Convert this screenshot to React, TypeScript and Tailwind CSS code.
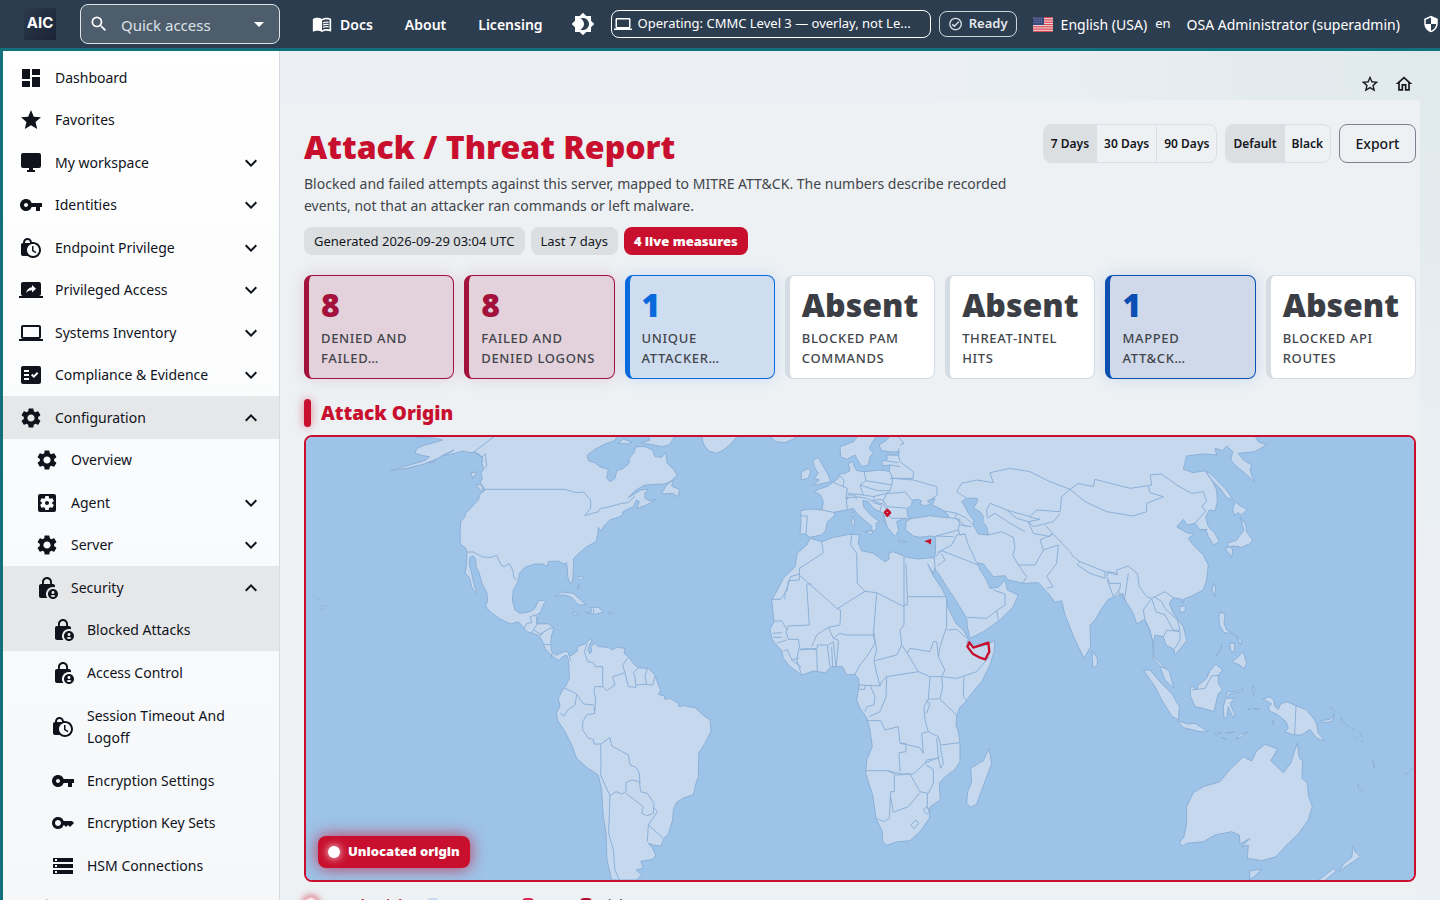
import React from "react";
import clsx from "clsx";
import type { IconType } from "react-icons";
import {
  MdArrowDropDown,
  MdBrightness4,
  MdComputer,
  MdDashboard,
  MdExpandLess,
  MdExpandMore,
  MdFactCheck,
  MdKey,
  MdLockClock,
  MdLockPerson,
  MdMenuBook,
  MdOutlineCheckCircle,
  MdOutlineHome,
  MdScreenShare,
  MdSearch,
  MdSecurity,
  MdSettings,
  MdSettingsApplications,
  MdStar,
  MdStarOutline,
  MdStorage,
  MdVpnKey,
} from "react-icons/md";

function DesktopIcon({ className }: { className?: string }) {
  return (
    <svg viewBox="0 0 24 24" fill="currentColor" className={className}>
      <path d="M4 2h16a2 2 0 0 1 2 2v11a2 2 0 0 1-2 2h-6v2h2v2H8v-2h2v-2H4a2 2 0 0 1-2-2V4a2 2 0 0 1 2-2z" />
    </svg>
  );
}

type NavItem = {
  label: string;
  icon: IconType | typeof DesktopIcon;
  level: 0 | 1 | 2;
  arrow?: "down" | "up";
  active?: boolean;
  tall?: boolean;
};

const navItems: NavItem[] = [
  { label: "Dashboard", icon: MdDashboard, level: 0 },
  { label: "Favorites", icon: MdStar, level: 0 },
  { label: "My workspace", icon: DesktopIcon, level: 0, arrow: "down" },
  { label: "Identities", icon: MdVpnKey, level: 0, arrow: "down" },
  { label: "Endpoint Privilege", icon: MdLockClock, level: 0, arrow: "down" },
  { label: "Privileged Access", icon: MdScreenShare, level: 0, arrow: "down" },
  { label: "Systems Inventory", icon: MdComputer, level: 0, arrow: "down" },
  { label: "Compliance & Evidence", icon: MdFactCheck, level: 0, arrow: "down" },
  { label: "Configuration", icon: MdSettings, level: 0, arrow: "up", active: true },
  { label: "Overview", icon: MdSettings, level: 1 },
  { label: "Agent", icon: MdSettingsApplications, level: 1, arrow: "down" },
  { label: "Server", icon: MdSettings, level: 1, arrow: "down" },
  { label: "Security", icon: MdLockPerson, level: 1, arrow: "up", active: true },
  { label: "Blocked Attacks", icon: MdLockPerson, level: 2, active: true },
  { label: "Access Control", icon: MdLockPerson, level: 2 },
  { label: "Session Timeout And Logoff", icon: MdLockClock, level: 2, tall: true },
  { label: "Encryption Settings", icon: MdVpnKey, level: 2 },
  { label: "Encryption Key Sets", icon: MdKey, level: 2 },
  { label: "HSM Connections", icon: MdStorage, level: 2 },
];

const cards = [
  { value: "8", label: "Denied and failed…", tone: "red" },
  { value: "8", label: "Failed and denied logons", tone: "red" },
  { value: "1", label: "Unique attacker…", tone: "blue" },
  { value: "Absent", label: "Blocked PAM commands", tone: "none" },
  { value: "Absent", label: "Threat-intel hits", tone: "none" },
  { value: "1", label: "Mapped ATT&CK…", tone: "navy" },
  { value: "Absent", label: "Blocked API routes", tone: "none" },
];

function Flag() {
  return (
    <svg viewBox="0 0 20 15" className="h-[15px] w-5 shrink-0">
      <clipPath id="flag">
        <rect width="20" height="15" rx="2" />
      </clipPath>
      <g clipPath="url(#flag)">
        <rect width="20" height="15" fill="#f3dfe2" />
        {[0, 1, 2, 3, 4, 5, 6].map((i) => (
          <rect key={i} y={i * 2.3} width="20" height="1.2" fill="#d9444f" />
        ))}
        <rect width="11" height="8" fill="#3b4a7c" />
        <path
          d="M1 1.5h9M1 3.5h9M1 5.5h9"
          stroke="#a7b1cf"
          strokeWidth=".6"
          strokeDasharray=".8 1"
        />
      </g>
    </svg>
  );
}

function Header() {
  return (
    <header className="flex h-[51px] shrink-0 items-center overflow-hidden border-b-[3px] border-[#11707c] bg-[#2d3d50] pl-6 whitespace-nowrap text-white">
      <div className="flex size-8 shrink-0 justify-center bg-linear-to-br from-[#2a3a4c] to-[#1b2436] pt-[6px] font-[Inter] text-[15px] leading-[18px] font-bold">
        AIC
      </div>
      <button className="ml-6 flex h-10 w-50 shrink-0 items-center rounded-lg border border-[#dfe4ea] bg-[#4e5d6c] px-2 text-[15px] text-[#dde2e7]">
        <MdSearch className="size-5 text-white" />
        <span className="ml-3 pt-[2px]">Quick access</span>
        <MdArrowDropDown className="ml-auto size-6 text-white" />
      </button>
      <nav className="ml-8 flex shrink-0 items-center gap-8 text-[14px] font-semibold">
        <a href="#docs" className="flex items-center gap-2">
          <MdMenuBook className="size-5" />
          Docs
        </a>
        <a href="#about">About</a>
        <a href="#licensing">Licensing</a>
      </nav>
      <button aria-label="Theme" className="ml-7 shrink-0">
        <MdBrightness4 className="size-6" />
      </button>
      <button className="ml-4 flex h-7 w-80 shrink-0 items-center gap-[6px] rounded-lg border border-white px-[2px] text-[13px]">
        <MdComputer className="size-[18px] shrink-0" />
        <span className="truncate">Operating: CMMC Level 3 — overlay, not Le...</span>
      </button>
      <span className="ml-2 flex h-[26px] w-[78px] shrink-0 items-center gap-[6px] rounded-lg border border-[#cdd4db] px-2 text-[13px] font-semibold text-[#e3e7ea]">
        <MdOutlineCheckCircle className="size-4" />
        Ready
      </span>
      <div className="ml-4 flex shrink-0 items-center gap-2 text-[14px]">
        <Flag />
        <span>English (USA)</span>
        <span className="text-[13px]">en</span>
      </div>
      <span className="ml-4 shrink-0 text-[14px]">OSA Administrator (superadmin)</span>
      <MdSecurity className="ml-[22px] size-[18px] shrink-0" />
    </header>
  );
}

function Sidebar() {
  return (
    <aside className="w-[280px] shrink-0 overflow-hidden border-r border-l-[3px] border-r-[#d5dbe2] border-l-[#11707c] bg-linear-to-b from-white to-[#f5f7f9] pt-[5px]">
      <ul className="text-[14px] leading-[22px] text-[#10131c]">
        {navItems.map((item) => (
          <li key={item.label}>
            <a
              href="#nav"
              className={clsx(
                "flex items-center pr-4",
                item.level === 0 && "pl-4",
                item.level === 1 && "pl-8",
                item.level === 2 && "pl-12",
                item.active && "bg-[#e6e7e9]",
                item.tall ? "h-[65px]" : "h-[42px] [li:nth-child(odd)>&]:h-[43px]"
              )}
            >
              <item.icon className="size-6 shrink-0" />
              <span className="ml-3 flex-1">{item.label}</span>
              {item.arrow === "down" && <MdExpandMore className="size-6" />}
              {item.arrow === "up" && <MdExpandLess className="size-6" />}
            </a>
          </li>
        ))}
        <li className="flex h-[43px] items-center pl-8">
          <MdStar className="size-6" />
        </li>
      </ul>
    </aside>
  );
}

// Land masses, west to east. Each region is traced in its own frame.
const americas = [
  "M325 10 350 22 400 24 428 30 395 40 370 46 350 56 345 70 365 76 388 80 378 90 350 99 310 110 272 122 320 115 372 102 408 88 430 75 462 60 430 77 465 70 490 63 510 68 524 66 540 74 548 84 546 100 550 118 543 128 547 145 541 158 556 180 540 192 535 210 518 228 497 250 494 262 482 275 480 310 481 342 498 355 501 370 499 408 495 430 508 442 515 470 526 490 528 482 520 455 514 425 508 405 510 382 520 378 527 388 528 410 538 430 545 458 560 488 563 512 557 528 570 545 600 567 633 582 655 575 668 590 680 605 700 610 718 618 730 640 735 655 750 672 765 684 778 692 785 682 800 675 806 692 808 745 795 772 785 785 775 805 780 828 770 848 772 870 795 905 815 945 830 985 860 1012 895 1035 905 1080 910 1160 918 1210 921 1290 935 1350 1010 1350 1025 1334 1008 1320 1030 1314 1022 1294 1060 1288 1067 1275 1058 1255 1045 1240 1060 1245 1083 1248 1092 1225 1105 1212 1118 1170 1120 1140 1130 1117 1150 1104 1180 1094 1188 1060 1195 1040 1196 970 1215 940 1233 905 1230 868 1215 860 1185 833 1150 827 1137 830 1135 820 1110 805 1095 808 1093 798 1075 793 1082 780 1075 765 1065 735 1045 715 1015 714 1000 700 985 680 972 670 975 655 950 652 935 660 925 652 895 650 885 640 872 650 876 662 870 672 864 660 870 640 877 632 870 628 855 642 835 648 830 665 812 678 800 663 785 668 768 676 755 665 752 640 755 615 762 595 745 581 710 582 714 560 722 545 730 525 740 510 715 512 705 535 690 545 660 550 645 540 637 510 640 480 655 452 658 430 675 412 705 402 728 402 742 409 745 395 775 393 790 402 800 398 802 420 803 440 810 460 818 453 820 420 821 385 840 367 860 350 888 335 894 310 895 292 903 304 914 285 930 270 965 258 970 244 1000 230 1010 210 1018 215 1010 235 1040 225 1068 208 1048 212 1035 205 1035 190 1045 178 1022 180 985 203 1005 182 1032 166 1060 163 1095 162 1115 152 1132 135 1120 118 1102 100 1097 68 1085 82 1065 80 1058 60 1035 50 1008 50 1000 70 988 85 987 100 970 115 950 122 945 145 930 155 920 143 925 118 900 110 885 98 865 92 862 75 885 58 915 42 945 32 955 10Z",
  "M1085 190 1100 165 1120 150 1115 168 1138 178 1135 200 1118 190 1090 192Z",
  "M1025 38 1050 30 1040 10 1130 10 1108 45 1085 50Z",
  "M955 40 970 27 995 36 985 42Z",
  "M1203 10 1210 42 1225 62 1250 70 1270 60 1290 45 1320 10Z",
  "M513 128 532 126 518 145Z",
  "M528 162 545 165 550 185 538 178Z",
  "M762 500 785 486 820 490 840 508 858 524 835 525 815 502 790 494Z",
  "M856 548 875 546 872 532 895 532 912 546 885 553Z",
  "M818 548 830 546 836 553 822 555Z",
  "M925 547 940 548 938 553 926 552Z",
  "M832 440 848 438 850 448M835 460 838 470 834 478Z",
  "M40 498 44 500M52 506 60 512M66 526 76 532 66 540Z",
  "M385 98 405 90 402 97Z",
];

const americasBorders = [
  "M522 66 582 20",
  "M522 66 545 82 556 72 560 108 550 118",
  "M556 178 792 178 830 188 850 186 872 210 872 235 854 257 895 245 900 236 930 230 965 220 985 218 1005 197",
  "M498 366 520 366 548 381 575 382 590 376 603 405 612 410 628 401 638 420 642 444 655 452",
  "M672 595 680 580 695 578 690 560 708 555 712 582M708 555 722 548M712 582 695 608M702 600 720 612 750 595 762 594M718 618 730 610M730 642 752 645M757 668 752 684M806 670 812 692",
  "M880 535 882 552",
  "M862 640 853 665 863 695 880 698 886 710 908 710 908 770 884 770 882 785 887 805 884 850 860 855 848 875 848 900 865 925 880 928 882 942 902 942 930 923 935 948 985 975 990 1005 1008 1012 1018 1030 1020 1060",
  "M882 825 850 822 830 792 795 775M830 795 825 825 803 840 792 858 780 850",
  "M882 830 884 850M908 770 920 782 945 765 938 740 975 728 968 705 985 682M975 728 985 770 1008 772 1005 740 1000 728 1015 714M1008 765 1040 763 1035 740 1042 715M1040 763 1058 766 1065 738",
  "M902 942 903 1000 902 1035 915 1065 930 1097 948 1085 965 1092 978 1085 978 1058 995 1050 1018 1055 1022 1085 1042 1090 1062 1120 1060 1150 1040 1157 1025 1150 1030 1130 978 1090",
  "M930 1097 928 1150 926 1210 940 1260 945 1320 958 1350",
  "M1062 1132 1072 1145 1045 1185 1090 1225M1045 1185 1042 1235",
];

const eurasia = [
  "M330 322 315 312 300 312 303 280 302 242 330 237 366 240 370 215 362 195 343 185 355 178 385 168 400 155 415 145 418 132 435 130 450 122 445 100 460 95 462 108 470 122 495 125 540 120 568 124 570 105 548 108 545 95 562 88 560 75 595 76 598 65 575 66 545 62 537 45 560 30 575 10 1660 10 1675 35 1700 45 1665 65 1615 70 1630 90 1655 105 1650 120 1663 155 1635 130 1610 110 1592 90 1598 65 1580 48 1568 62 1545 55 1550 75 1510 72 1460 78 1450 118 1480 128 1515 122 1535 150 1550 180 1552 215 1545 243 1528 240 1517 262 1525 290 1545 310 1558 335 1540 345 1525 320 1518 300 1500 300 1485 280 1462 285 1450 268 1430 290 1460 308 1483 312 1465 325 1480 345 1510 375 1525 405 1520 450 1510 480 1475 498 1450 508 1448 520 1445 508 1420 503 1408 520 1420 550 1450 590 1460 632 1425 675 1422 658 1398 645 1390 620 1365 615 1360 640 1362 680 1380 700 1408 725 1422 775 1395 750 1380 710 1360 685 1358 630 1338 575 1330 570 1310 582 1300 550 1278 515 1268 490 1245 500 1225 508 1205 535 1185 570 1170 585 1172 650 1152 685 1125 630 1095 555 1085 512 1065 517 1045 490 1015 458 970 460 925 450 915 437 880 440 860 415 850 402 832 398 840 420 860 450 870 475 895 472 915 450 922 480 955 495 940 530 900 570 850 605 810 625 802 590 800 565 770 515 740 470 712 425 708 424 700 400 706 370 707 320 690 318 660 322 640 318 617 300 618 275 635 265 612 265 590 275 596 302 585 320 565 295 553 275 550 250 520 235 505 215 488 212 492 232 515 258 540 275 528 280 530 298 516 305 515 288 490 268 470 250 460 235 440 240 405 246 403 258 382 275 378 300 365 315Z",
  "M480 10 460 35 420 50 422 80 440 88 465 75 470 85 485 110 505 105 510 80 520 70 508 55 515 40 535 10Z",
  "M338 92 355 82 365 100 385 135 392 155 360 162 338 165 358 150 342 145 355 130 345 115Z",
  "M305 125 325 115 332 125 325 145 303 150Z",
  "M205 10 225 35 255 38 285 25 290 10Z",
  "M494 305 518 302 515 315ZM455 266 465 268 462 288 455 284ZM458 245 464 250 460 262 455 255ZM595 330 620 335 600 337Z",
  "M1515 122 1530 130 1575 175 1600 210 1580 203 1560 175 1535 150Z",
  "M1605 215 1622 228 1642 238 1625 255 1612 248 1605 258 1598 240Z",
  "M1620 262 1638 285 1640 305 1658 330 1652 340 1625 352 1600 348 1585 350 1582 340 1610 330 1620 315 1632 300Z",
  "M1575 355 1590 350 1598 360 1595 383 1588 372ZM1598 352 1615 350 1605 360Z",
  "M1540 458 1547 475 1545 500 1536 482ZM1438 530 1457 527 1455 545 1442 548Z",
  "M1176 662 1192 685 1192 710 1178 710Z",
  "M1560 546 1575 552 1572 580 1580 600 1605 612 1612 622 1595 610 1572 608 1558 585 1557 560ZM1610 622 1625 632 1622 645ZM1588 640 1605 640 1602 668 1592 660ZM1546 680 1560 660 1567 642 1560 665ZM1595 695 1610 685 1630 665 1640 700 1632 717 1620 705Z",
];

const eurasiaBorders = [
  "M303 258 322 258 318 312M366 240 405 248M400 157 430 170 442 175 438 200 442 240M430 170 432 150 418 135M442 190 490 195 480 165 498 152 492 125M498 152 575 165 578 145 568 122M480 165 510 175 535 182 570 182 575 165M490 195 520 200 560 190 570 182M438 205 470 200 500 205 520 215M520 200 525 215 550 222 560 240M440 210 445 195 465 195 470 208",
  "M570 145 640 145 640 125 600 95 595 76M570 105 600 110M555 92 595 98M578 145 640 150 710 170 712 195 690 210M560 190 600 188 615 185 635 210M560 190 550 212 562 230 625 235M562 230 558 250 575 265 612 265M515 212 545 208 555 220M520 218 545 225 540 245M550 250 560 285",
  "M600 45 612 40 595 20M596 76 596 55",
  "M720 240 770 250 800 265 820 285M770 250 765 265 800 290M745 262 780 268 775 300 708 318M775 300 780 315 795 312 805 345 830 398M795 312 770 315 755 345 712 368M708 318 760 320M708 380 725 362 835 405M712 408 735 390 725 372M778 285 815 290",
  "M770 185 785 160 830 150 880 158 870 128 930 115 990 125 1050 155 1110 178 1135 160 1180 170 1185 148 1290 175 1340 168 1355 165 1350 135 1385 132 1430 165 1475 190 1510 185 1520 215 1505 228 1517 243",
  "M770 185 800 205M860 265 885 250 930 280 975 305M870 220 860 240 862 260M870 220 920 240 990 260 1010 240 1080 245 1085 200 1110 178M920 240 950 265 985 275 1000 310 1050 320 1055 310",
  "M865 315 905 305 940 322 945 355 938 375 955 405 1005 405 1030 360 1020 330 1060 312M955 405 980 440 968 460M1030 360 1075 345 1070 400 1040 440 1060 470 1040 475",
  "M990 262 1020 268 985 275 1000 290 1060 275 1080 250M1035 285 1060 312 1110 365 1120 380 1140 395 1215 425 1215 445 1170 430 1132 405 1140 395",
  "M1110 178 1155 215 1220 245 1300 258 1340 245 1340 220 1390 200 1350 188 1345 168",
  "M1215 425 1252 435 1250 420 1285 408 1312 430 1318 470 1340 500 1355 505 1395 485 1420 503M1220 440 1225 425 1252 430M1222 442 1228 460 1262 460 1258 482 1240 498M1252 480 1278 515M1285 430 1275 500M1222 450 1240 500",
  "M1355 505 1330 540 1335 570 1350 600 1358 640M1355 505 1368 545 1395 555 1420 600 1440 600 1432 570 1395 535 1385 515 1362 500M1390 620 1400 600 1440 605 1440 630 1425 655M1378 708 1395 715",
  "M802 562 860 565 890 542 915 525 915 492 880 480M890 542 895 570M1485 280 1500 262 1517 243M1498 300 1522 298",
];

const africa = [
  "M330 325 365 335 400 322 455 312 478 315 475 340 485 362 520 370 555 395 567 388 566 370 580 365 620 382 655 387 690 383 703 385 705 412 700 430 683 402 700 438 725 475 740 505 745 535 758 560 768 580 790 600 805 628 800 640 820 652 850 648 885 632 882 665 870 705 845 755 815 790 795 818 780 832 770 858 768 885 775 905 780 940 780 995 765 1018 730 1045 718 1060 721 1110 690 1130 688 1165 660 1205 630 1232 590 1236 560 1246 548 1235 547 1205 528 1165 518 1095 497 1030 500 990 517 950 510 900 500 862 480 835 470 810 478 765 475 745 465 733 440 735 428 710 395 710 375 728 340 723 305 735 270 710 250 685 245 662 225 640 215 625 210 598 222 575 215 510 235 475 250 445 285 410 292 370 320 345Z",
  "M867 955 875 1000 860 1040 830 1122 812 1132 800 1120 803 1085 815 1055 812 1015 850 992Z",
];

const africaBorders = [
  "M365 335 370 368 345 385 298 415 298 450 265 452 262 480 242 508 217 508M298 435 412 536 495 484 530 488 612 530 612 380M298 432 272 440 255 490 255 508M455 312 452 345 470 370 472 460 495 484M612 525 622 525 622 500 738 500M622 500 618 400",
  "M320 462 328 585 265 588 258 605 265 628 295 628 300 658 322 655M320 462 335 462M412 536 422 540 420 585 385 592 400 625 418 610 440 615 520 615 530 490M222 573 245 573 262 600M218 610 245 608M218 622 245 622M230 640 260 630M250 665 262 658 275 690 295 685M275 690 305 712M297 655 290 690 305 735M322 655 350 660 352 725M300 660 352 655 352 645 382 645 390 712M335 650 350 615 385 592M385 645 400 635 408 710M395 650 398 710M400 625 415 630 412 680 408 710",
  "M520 615 525 640 500 680 480 705 465 733M520 600 530 660 522 690 530 730 540 768 478 765M525 692 590 675 605 645 622 670 655 725 560 740 545 755 540 768M612 530 612 585 600 600 605 645M622 670 630 655 690 665 700 635 710 635 715 680 735 720 725 740M740 505 740 590 720 650 715 680M740 600 770 598 800 625",
  "M655 725 690 740 725 740 770 745 830 725 868 680M725 740 728 770 720 808 770 855M792 740 790 800 800 812M690 740 685 808 718 806M685 808 672 830 675 870 685 905M678 812 690 820 680 850M560 740 558 800 540 845 508 860M478 778 495 778 495 765M510 765 525 800 522 825 500 830 495 845M500 872 542 872 555 900 595 890 600 940 658 952 670 970 665 910 685 905 715 920 722 945 780 938M600 940 618 940 618 965 597 968 600 1025M497 1022 562 1022 605 1032 640 1032 675 1000 720 980M675 1000 680 990 715 985 710 925M715 985 722 1015 730 1000 720 945M562 1022 590 1035 630 1032 660 1085 685 1090 700 1060 700 1018 678 1005M583 1035 583 1085 572 1085 568 1165 550 1175 530 1165M572 1100 580 1147 625 1130 660 1088M682 1090 682 1130 690 1145M670 1140 680 1130 688 1145 680 1153ZM632 1185 648 1170 656 1180 642 1196Z",
];

const oceania = [
  "M417 1240 432 1220 440 1180 440 1130 460 1088 490 1070 540 1055 570 1018 610 980 635 993 650 962 675 943 713 957 692 992 730 1028 752 1000 772 938 778 985 788 992 786 1045 802 1060 805 1095 817 1130 805 1170 775 1212 745 1240 708 1280 665 1292 622 1285 625 1245 605 1250 630 1225 600 1242 598 1215 575 1205 525 1215 490 1235 440 1240 430 1248Z",
  "M630 1322 665 1318 640 1342 628 1348ZM830 1355 880 1316 890 1322 850 1355ZM896 1325 912 1300 935 1282 940 1245 945 1265 962 1280 940 1295Z",
  "M310 720 330 720 360 755 395 790 418 830 415 870 395 858 365 810 345 770Z",
  "M413 873 445 882 465 880 505 905 480 905 430 893Z",
  "M523 910 545 908 530 914ZM555 908 583 906 560 912ZM545 922 558 928ZM588 928 600 913 625 906 600 922Z",
  "M450 780 455 768 470 778 475 765 500 745 508 725 527 702 548 720 535 735 535 760 548 780 535 790 522 845 490 835 465 830 452 800Z",
  "M562 785 600 783 610 773 605 787 570 790 560 805 585 805 570 820 585 855 580 865 565 830 560 865 552 865 550 830 558 800Z",
  "M638 767 645 780 640 800ZM622 838 632 838ZM640 835 662 836 650 840ZM698 870 702 875 699 885Z",
  "M668 807 690 800 702 812 705 830 715 838 722 822 740 815 768 827 800 840 820 865 830 882 835 910 855 933 830 925 810 898 785 915 762 915 735 905 745 895 738 875 710 852 690 845 685 830 695 822Z",
  "M842 872 870 868 884 850 875 875 850 878ZM867 828 885 845M903 863 915 882 905 878ZM920 886 928 890M935 895 945 900M948 920 955 924M958 905 968 922M962 932 969 937M998 990 1004 1000 1002 1014ZM953 1063 970 1087 958 1080ZM1092 1032 1105 1028 1096 1037ZM1112 1018 1122 1012",
];

const oceaniaBorders = ["M768 827 764 915", "M455 780 495 775 515 738 535 736M500 738 508 725"];

function WorldMap() {
  return (
    <svg
      viewBox="0 0 1108 443"
      role="img"
      aria-label="Attack origin map"
      className="block w-full bg-[#9dc3e8]"
    >
      <g fill="#c6d8ee" stroke="#8cb0d7" strokeWidth="3" strokeLinejoin="round">
        <g transform="translate(-6 -7) scale(.33333)">
          <path d={americas.join("")} />
          <path d={americasBorders.join("")} fill="none" />
        </g>
        <g transform="translate(394 -7) scale(.33333)">
          <path d={eurasia.join("")} />
          <path d={eurasiaBorders.join("")} fill="none" />
          <path
            d="M622 258 622 237 635 225 637 210 655 208 665 213 660 222 675 228 692 222 682 212 705 205 697 225 725 238 745 255 745 264 690 257 640 265ZM785 215 800 205 832 205 833 215 825 225 820 235 840 245 850 260 848 275 860 290 865 315 835 312 820 285 822 272 805 250 795 230Z"
            fill="#9dc3e8"
          />
          <path d={africa.join("")} />
          <path d={africaBorders.join("")} fill="none" />
          <g stroke="#c8102e">
            <path
              d="M802 650 808 637 820 653 865 638 868 665 856 688 840 683 818 671Z"
              fill="none"
              strokeWidth="7"
            />
            <path d="M555 247 562 240 570 248 562 257Z" strokeWidth="8" />
            <path
              d="M677 334 692 329 690 341 686 336Z"
              fill="#c8102e"
              strokeWidth="4"
            />
          </g>
        </g>
        <g transform="translate(734 -7) scale(.33333)">
          <path d={oceania.join("")} />
          <path d={oceaniaBorders.join("")} fill="none" />
        </g>
      </g>
    </svg>
  );
}

function Segmented({ options }: { options: string[] }) {
  return (
    <div className="flex h-[39px] divide-x divide-[#d9dfe7] overflow-hidden rounded-lg border border-[#d9dfe7]">
      {options.map((option, i) => (
        <button
          key={option}
          className={clsx("px-[7px] text-[12px] font-semibold", i === 0 && "bg-[#dcdfe2]")}
        >
          {option}
        </button>
      ))}
    </div>
  );
}

function App() {
  return (
    <div className="flex h-screen flex-col overflow-hidden bg-[#ecf0f4] font-['Noto_Sans','Open_Sans',sans-serif] text-[#15171c]">
      <Header />
      <div className="flex min-h-0 flex-1">
        <Sidebar />
        <main className="min-w-0 flex-1 overflow-hidden bg-[radial-gradient(circle_at_top_right,#e0e9eb,#ecf0f4_520px)] pr-5">
          <div className="flex h-[49px] items-center justify-end gap-[14px] pt-4 pr-[6px]">
            <button aria-label="Add to favorites">
              <MdStarOutline className="size-5" />
            </button>
            <button aria-label="Home">
              <MdOutlineHome className="size-5" />
            </button>
          </div>
          <div className="bg-[#edf1f4] pt-6 pr-1 pl-6">
            <div className="flex items-start justify-between">
              <div className="max-w-[736px]">
                <h1 className="mb-[3px] text-[32px] leading-[46px] font-black text-[#c8102e]">
                  Attack / Threat Report
                </h1>
                <p className="text-[14px] leading-[22px] text-[#42454b]">
                  Blocked and failed attempts against this server, mapped to MITRE ATT&CK. The
                  numbers describe recorded events, not that an attacker ran commands or left
                  malware.
                </p>
              </div>
              <div className="flex gap-2">
                <Segmented options={["7 Days", "30 Days", "90 Days"]} />
                <Segmented options={["Default", "Black"]} />
                <button className="h-[39px] w-[77px] rounded-lg border border-[#7c828e] text-[14px] font-medium">
                  Export
                </button>
              </div>
            </div>

            <div className="mt-[10px] flex gap-[6px] text-[13px] leading-7">
              <span className="rounded-lg bg-[#dbdfe2] px-[10px]">
                Generated 2026-09-29 03:04 UTC
              </span>
              <span className="rounded-lg bg-[#dbdfe2] px-[10px]">Last 7 days</span>
              <span className="rounded-lg bg-[#c8102e] px-[10px] font-black text-white">
                4 live measures
              </span>
            </div>

            <div className="mt-5 grid grid-cols-7 gap-[10px]">
              {cards.map((card, i) => (
                <div
                  key={i}
                  className={clsx(
                    "h-[104px] rounded-lg border border-l-[5px] pt-[9px] pr-3 pl-3",
                    card.tone === "red" &&
                      "border-[#a3123a] bg-[#e3d1db] shadow-[0_0_16px_#a3123a26]",
                    card.tone === "blue" &&
                      "border-[#0a69dc] bg-[#cfddf0] shadow-[0_0_16px_#0a69dc26]",
                    card.tone === "navy" &&
                      "border-[#0b4fb3] bg-[#cfd9ea] shadow-[0_0_16px_#0b4fb326]",
                    card.tone === "none" && "border-[#d6dce4] bg-white"
                  )}
                >
                  <div
                    className={clsx(
                      "text-[32px] leading-[40px] font-black",
                      card.tone === "red" && "text-[#a3123a]",
                      card.tone === "blue" && "text-[#0a69dc]",
                      card.tone === "navy" && "text-[#0b4fb3]",
                      card.tone === "none" && "text-[#3b3e45]"
                    )}
                  >
                    {card.value}
                  </div>
                  <div className="mt-[3px] text-[13px] leading-5 font-medium tracking-wider text-[#42454b] uppercase">
                    {card.label}
                  </div>
                </div>
              ))}
            </div>

            <h2 className="mt-5 flex items-center gap-[10px] text-[19px] leading-7 font-black text-[#c8102e]">
              <span className="h-7 w-[7px] rounded-full bg-[#c8102e] shadow-[0_0_10px_#c8102e80]" />
              Attack Origin
            </h2>

            <div className="relative mt-2 overflow-hidden rounded-lg border-2 border-[#c8102e]">
              <WorldMap />
              <div className="absolute bottom-3 left-3 flex h-8 items-center gap-2 rounded-lg bg-[#c8102e] px-[10px] text-[13px] font-black text-white shadow-[0_0_16px_#c8102ecc]">
                <span className="size-3 rounded-full bg-white shadow-[0_0_8px_white]" />
                Unlocated origin
              </div>
            </div>

            <div className="mt-3 flex items-center gap-4 text-[13px] leading-5">
              <span className="flex items-center gap-2 font-bold text-[#c8102e]">
                <span className="size-[14px] rounded-full border-2 border-[#c8102e33] bg-white shadow-[0_0_8px_#c8102e]" />
                Attack origin
              </span>
              <span className="flex items-center gap-[6px]">
                <span className="size-3 rounded-sm bg-[#c6d8ee]" />
                No events
              </span>
              <span className="flex items-center gap-[6px]">
                <span className="size-3 rounded-sm bg-[#d62a50]" />
                Low
              </span>
              <span className="flex items-center gap-[6px]">
                <span className="size-3 rounded-sm bg-[#b30f2f]" />
                High
              </span>
            </div>
          </div>
        </main>
      </div>
    </div>
  );
}

export default App;
